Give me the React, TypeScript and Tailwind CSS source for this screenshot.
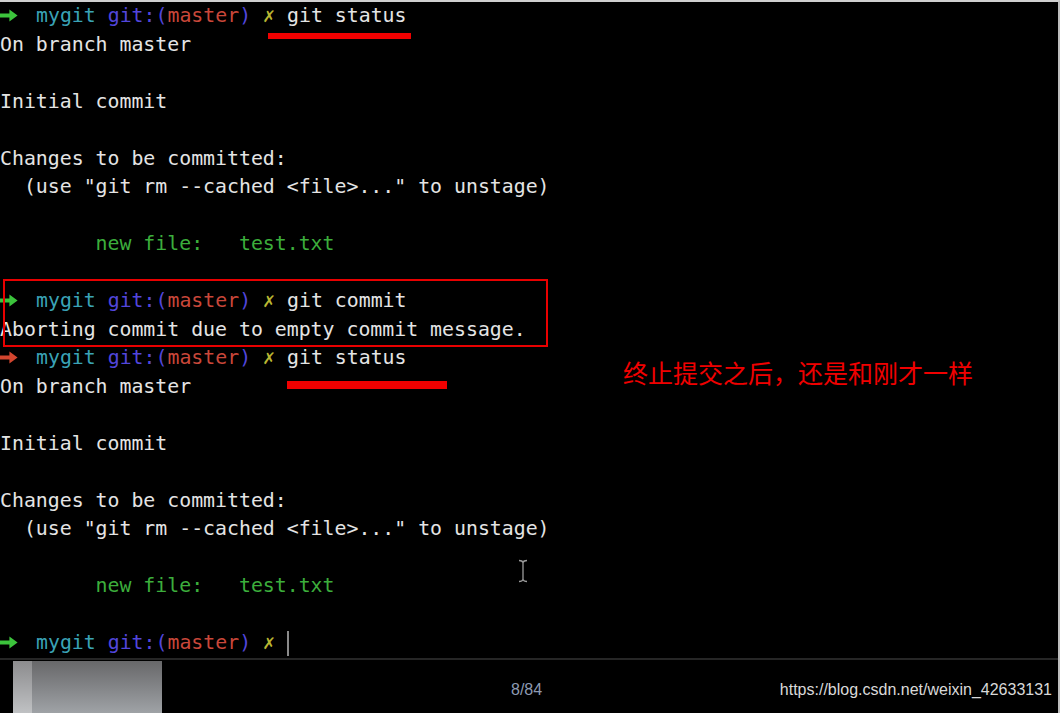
import React from "react";

const mono = { fontFamily: '"DejaVu Sans Mono", "Liberation Mono", monospace' };

function Arrow({ color }: { color: string }) {
  return (
    <span className="inline-block w-[36px] align-middle">
      <svg width="18" height="13" viewBox="0 0 18 13" className="block -mt-[2px]">
        <path d="M0 4.4h9.4V0.6l8.2 5.9-8.2 5.9V8.6H0z" fill={color} />
      </svg>
    </span>
  );
}

function Prompt({ ok, cmd, cursor }: { ok: boolean; cmd?: string; cursor?: boolean }) {
  return (
    <div className="h-[28.5px] leading-[28.5px] whitespace-pre flex items-center">
      <Arrow color={ok ? "#3cc43c" : "#d2462f"} />
      <span className="text-[#3aa3b6]">mygit</span>
      <span> </span>
      <span className="text-[#5246dc]">git:(</span>
      <span className="text-[#c9473a]">master</span>
      <span className="text-[#5246dc]">)</span>
      <span> </span>
      <span className="inline-block w-[12px] text-[#b9b632]">✗</span>
      <span> </span>
      {cmd && <span className="text-[#e4e4e4]">{cmd}</span>}
      {cursor && <span className="inline-block w-[2px] h-[25px] bg-[#8a8a8a]" />}
    </div>
  );
}

function Line({ children, green }: { children?: React.ReactNode; green?: boolean }) {
  return (
    <div
      className={`h-[28.5px] leading-[28.5px] whitespace-pre ${green ? "text-[#3cae3c]" : "text-[#e4e4e4]"}`}
    >
      {children ?? " "}
    </div>
  );
}

export default function App() {
  return (
    <div className="w-[1060px] h-[713px] bg-black border-t-2 border-r-2 border-t-[#cfcfcf] border-r-[#bdbdbd] flex flex-col overflow-hidden">
      {/* terminal */}
      <div className="relative h-[660px] text-[19.85px]" style={mono}>
        <Prompt ok cmd="git status" />
        <Line>On branch master</Line>
        <Line />
        <Line>Initial commit</Line>
        <Line />
        <Line>Changes to be committed:</Line>
        <Line>{'  (use "git rm --cached <file>..." to unstage)'}</Line>
        <Line />
        <Line green>{"        new file:   test.txt"}</Line>
        <Line />
        <Prompt ok cmd="git commit" />
        <Line>Aborting commit due to empty commit message.</Line>
        <Prompt ok={false} cmd="git status" />
        <Line>On branch master</Line>
        <Line />
        <Line>Initial commit</Line>
        <Line />
        <Line>Changes to be committed:</Line>
        <Line>{'  (use "git rm --cached <file>..." to unstage)'}</Line>
        <Line />
        <Line green>{"        new file:   test.txt"}</Line>
        <Line />
        <Prompt ok cursor />

        {/* annotations */}
        <div className="absolute left-[268px] top-[31px] w-[143px] h-[6px] bg-[#f00000]" />
        <div className="absolute left-[3px] top-[277px] w-[545px] h-[68px] border-2 border-[#e80000]" />
        <div className="absolute left-[287px] top-[379px] w-[160px] h-[8px] bg-[#f00000]" />
        <div
          className="absolute left-[623px] top-[355px] text-[25px] leading-[30px] text-[#f00000] whitespace-nowrap"
          style={{ fontFamily: '"Noto Sans CJK SC", "Noto Sans", sans-serif' }}
        >
          终止提交之后，还是和刚才一样
        </div>
        <svg className="absolute left-[517px] top-[557px]" width="12" height="24" viewBox="0 0 12 24">
          <path d="M2 1.5c2 0 3.5 0.6 4 2 0.5-1.4 2-2 4-2M6 3.5v17M2 22.5c2 0 3.5-0.6 4-2 0.5 1.4 2 2 4 2" stroke="#9a9a9a" strokeWidth="1.3" fill="none" />
        </svg>
      </div>

      {/* bottom bar */}
      <div className="flex-1 border-t-2 border-[#262626] flex items-start">
        <div className="ml-[13px] mt-[1px] w-[149px] h-[60px] flex bg-linear-to-b from-[#68686a] to-[#a8acb0]">
          <div className="w-[19px] h-full bg-linear-to-b from-[#8c8c8e] to-[#c8cacc]" />
        </div>
        <div
          className="ml-[349px] pt-[21px] text-[16px] leading-[18px] text-[#8d9ab2]"
          style={{ fontFamily: '"Liberation Sans", Arial, sans-serif' }}
        >
          8/84
        </div>
        <div className="flex-1" />
        <div
          className="pr-[6px] pt-[21px] text-[16px] leading-[18px] text-[#d9d9d9]"
          style={{ fontFamily: '"Liberation Sans", Arial, sans-serif' }}
        >
          https://blog.csdn.net/weixin_42633131
        </div>
      </div>
    </div>
  );
}
